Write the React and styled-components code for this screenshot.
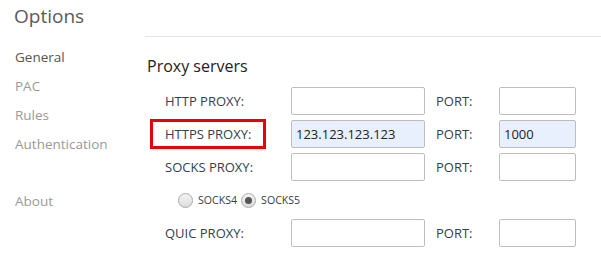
import React from "react";
import styled, { createGlobalStyle } from "styled-components";

const Global = createGlobalStyle`
  html, body { margin: 0; padding: 0; background: #fff; }
  body { font-family: "Open Sans", "Noto Sans", sans-serif; color: #333; }
`;

const Page = styled.div`
  display: grid;
  grid-template-columns: 145px 1fr;
  grid-template-rows: 37px 1fr;
  width: 601px;
  height: 258px;
  overflow: hidden;
`;

const Title = styled.h1`
  margin: 0;
  padding: 3px 0 0 14px;
  font-size: 19px;
  font-weight: 400;
  color: #5a5a5a;
  line-height: 26px;
`;

const TopLine = styled.div`
  border-bottom: 1px solid #e4e4e4;
`;

const Nav = styled.nav`
  display: flex;
  flex-direction: column;
  padding: 6px 0 0 15px;
`;

const NavItem = styled.div`
  font-size: 13.5px;
  line-height: 29px;
  color: ${(p) => (p.$active ? "#555" : "#999")};
  margin-top: ${(p) => (p.$gap ? "28px" : "0")};
`;

const Content = styled.main`
  padding: 18px 0 0 2px;
`;

const Heading = styled.h2`
  margin: 0 0 10px 0;
  font-size: 16px;
  font-weight: 400;
  color: #222;
  line-height: 22px;
`;

const Form = styled.div`
  display: grid;
  grid-template-columns: 141px 134px 74px 77px;
  grid-auto-rows: 28px;
  row-gap: 5px;
  margin-left: 3px;
  align-items: center;
`;

const LabelCell = styled.div`
  display: flex;
  align-items: center;
`;

const Label = styled.span`
  display: inline-flex;
  align-items: center;
  height: 24px;
  padding: 0 12px;
  border: 3px solid ${(p) => (p.$highlight ? "#e8000b" : "transparent")};
  font-size: 13px;
  color: #34404f;
  white-space: nowrap;
`;

const PortLabel = styled.span`
  padding-left: 11px;
  font-size: 13px;
  color: #34404f;
`;

const Input = styled.input`
  box-sizing: border-box;
  width: 100%;
  height: 28px;
  margin: 0;
  padding: 0 4px;
  border: 1px solid #bdbdbd;
  border-radius: 2px;
  background: ${(p) => (p.$filled ? "#e8f0fe" : "#fff")};
  font-family: "Open Sans", "Noto Sans", sans-serif;
  font-size: 13px;
  color: #222;
  outline: none;
`;

const RadioRow = styled.div`
  grid-column: 1 / -1;
  display: flex;
  align-items: center;
  padding-left: 28px;
  height: 22px;
`;

const RadioOption = styled.label`
  display: inline-flex;
  align-items: center;
  gap: 5px;
  margin-right: 4px;
  font-size: 10.6px;
  color: #34404f;
`;

const RadioCircle = styled.span`
  box-sizing: border-box;
  width: 15px;
  height: 15px;
  border-radius: 50%;
  border: 1px solid #a9a9a9;
  background: linear-gradient(#f4f4f4, #dcdcdc);
  display: inline-flex;
  align-items: center;
  justify-content: center;
  &::after {
    content: "";
    display: ${(p) => (p.$checked ? "block" : "none")};
    width: 7px;
    height: 7px;
    border-radius: 50%;
    background: #555;
  }
`;

const rows = [
  { label: "HTTP PROXY:", host: "", port: "" },
  { label: "HTTPS PROXY:", host: "123.123.123.123", port: "1000", highlight: true },
  { label: "SOCKS PROXY:", host: "", port: "" },
];

function Row({ label, host, port, highlight }) {
  return (
    <>
      <LabelCell>
        <Label $highlight={highlight}>{label}</Label>
      </LabelCell>
      <Input $filled={!!host} defaultValue={host} />
      <PortLabel>PORT:</PortLabel>
      <Input $filled={!!port} defaultValue={port} />
    </>
  );
}

export default function App() {
  return (
    <>
      <Global />
      <Page>
        <Title>Options</Title>
        <TopLine />
        <Nav>
          <NavItem $active>General</NavItem>
          <NavItem>PAC</NavItem>
          <NavItem>Rules</NavItem>
          <NavItem>Authentication</NavItem>
          <NavItem $gap>About</NavItem>
        </Nav>
        <Content>
          <Heading>Proxy servers</Heading>
          <Form>
            {rows.map((r) => (
              <Row key={r.label} {...r} />
            ))}
            <RadioRow>
              <RadioOption>
                <RadioCircle />
                SOCKS4
              </RadioOption>
              <RadioOption>
                <RadioCircle $checked />
                SOCKS5
              </RadioOption>
            </RadioRow>
            <Row label="QUIC PROXY:" host="" port="" />
          </Form>
        </Content>
      </Page>
    </>
  );
}
